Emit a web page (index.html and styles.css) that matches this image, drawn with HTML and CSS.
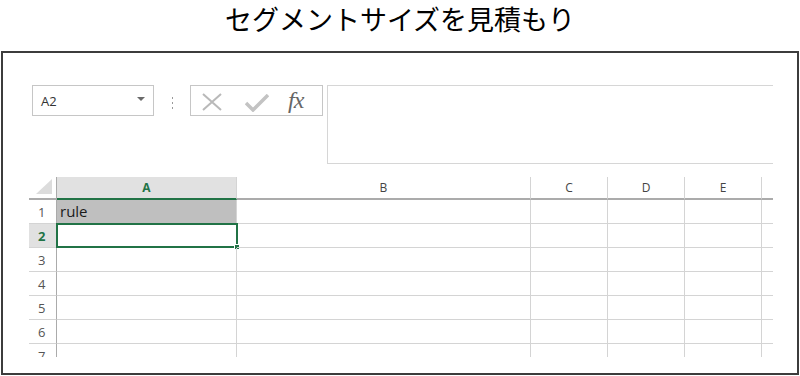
FILE: index.html
```html
<!DOCTYPE html>
<html lang="ja">
<head>
    <meta charset="UTF-8">
    <meta name="viewport" content="width=device-width, initial-scale=1.0">
    <title>セグメントサイズを見積もり</title>
    <link rel="stylesheet" href="styles.css">
</head>
<body>
    <h1 class="title">セグメントサイズを見積もり</h1>

    <div class="frame">
        <div class="formula-bar">
            <div class="name-box">
                <span>A2</span>
                <svg class="name-arrow" width="8" height="5" viewBox="0 0 8 5"><path d="M0 0 H8 L4 4 Z" fill="#6a6a6a"/></svg>
            </div>
            <svg class="grip" width="3" height="14" viewBox="0 0 3 14">
                <rect x="1" y="1" width="1" height="2" fill="#9a9a9a"/>
                <rect x="1" y="6" width="1" height="2" fill="#9a9a9a"/>
                <rect x="1" y="11" width="1" height="2" fill="#9a9a9a"/>
            </svg>
            <div class="fx-buttons">
                <svg class="icon-cancel" width="20" height="18" viewBox="0 0 20 18">
                    <path d="M1 1 L19 17 M19 1 L1 17" stroke="#b9b9b9" stroke-width="2" fill="none"/>
                </svg>
                <svg class="icon-enter" width="24" height="18" viewBox="0 0 24 18">
                    <path d="M1 9 L8 16 L23 1" stroke="#c3c3c3" stroke-width="3.5" fill="none"/>
                </svg>
                <span class="fx">fx</span>
            </div>
            <div class="formula-input"></div>
        </div>

        <div class="sheet">
            <!-- column headers -->
            <div class="cell corner"><span class="corner-mark"></span></div>
            <div class="cell col-head col-active">A</div>
            <div class="cell col-head">B</div>
            <div class="cell col-head">C</div>
            <div class="cell col-head">D</div>
            <div class="cell col-head">E</div>
            <div class="cell col-head last"></div>

            <!-- row 1 -->
            <div class="cell row-head">1</div>
            <div class="cell filled">rule</div>
            <div class="cell"></div>
            <div class="cell"></div>
            <div class="cell"></div>
            <div class="cell"></div>
            <div class="cell last"></div>

            <!-- row 2 -->
            <div class="cell row-head row-active">2</div>
            <div class="cell selected"><span class="fill-handle"></span></div>
            <div class="cell"></div>
            <div class="cell"></div>
            <div class="cell"></div>
            <div class="cell"></div>
            <div class="cell last"></div>

            <!-- row 3 -->
            <div class="cell row-head">3</div>
            <div class="cell"></div>
            <div class="cell"></div>
            <div class="cell"></div>
            <div class="cell"></div>
            <div class="cell"></div>
            <div class="cell last"></div>

            <!-- row 4 -->
            <div class="cell row-head">4</div>
            <div class="cell"></div>
            <div class="cell"></div>
            <div class="cell"></div>
            <div class="cell"></div>
            <div class="cell"></div>
            <div class="cell last"></div>

            <!-- row 5 -->
            <div class="cell row-head">5</div>
            <div class="cell"></div>
            <div class="cell"></div>
            <div class="cell"></div>
            <div class="cell"></div>
            <div class="cell"></div>
            <div class="cell last"></div>

            <!-- row 6 -->
            <div class="cell row-head">6</div>
            <div class="cell"></div>
            <div class="cell"></div>
            <div class="cell"></div>
            <div class="cell"></div>
            <div class="cell"></div>
            <div class="cell last"></div>

            <!-- row 7 (cut off, as in the window) -->
            <div class="cell row-head">7</div>
            <div class="cell"></div>
            <div class="cell"></div>
            <div class="cell"></div>
            <div class="cell"></div>
            <div class="cell"></div>
            <div class="cell last"></div>
        </div>
    </div>
</body>
</html>
```

FILE: styles.css
```css
:root {
    --frame: #3c3c3c;
    --grid: #d4d4d4;
    --head-line: #ababab;
    --green: #217346;
    --head-bg: #e1e1e1;
    --cell-fill: #bfbfbf;
}

* {
    box-sizing: border-box;
}

body {
    margin: 0;
    background: #ffffff;
    font-family: "Noto Sans", "Open Sans", sans-serif;
    color: #000000;
}

.title {
    margin: 0;
    height: 51px;
    padding-top: 1px;
    line-height: 36px;
    text-align: center;
    font-family: "Noto Sans CJK JP", "Noto Sans", sans-serif;
    font-size: 27px;
    font-weight: 400;
}

.frame {
    margin-left: 1px;
    width: 798px;
    height: 324px;
    border: 2px solid var(--frame);
    overflow: hidden;
}

/* formula bar */
.formula-bar {
    display: flex;
    align-items: flex-start;
    padding: 32px 0 0 29px;
    height: 124px;
}

.name-box {
    display: flex;
    align-items: center;
    justify-content: space-between;
    width: 122px;
    height: 31px;
    padding: 0 8px 0 8px;
    border: 1px solid #c6c6c6;
    font-family: "Open Sans", sans-serif;
    font-size: 13px;
    color: #333333;
}

.name-arrow {
    margin-top: -2px;
}

.grip {
    margin: 11px 16px 0 17px;
}

.fx-buttons {
    display: flex;
    align-items: center;
    width: 133px;
    height: 31px;
    padding-left: 11px;
    border: 1px solid #c6c6c6;
}

.icon-cancel {
    margin-top: 2px;
}

.icon-enter {
    margin: 4px 0 0 23px;
}

.fx {
    margin-left: 19px;
    font-family: "Liberation Serif", serif;
    font-style: italic;
    font-size: 24px;
    color: #666666;
    letter-spacing: -1px;
}

.formula-input {
    margin-left: 4px;
    width: 446px;
    height: 79px;
    border: 1px solid #d6d6d6;
    border-right: none;
}

/* sheet */
.sheet {
    display: grid;
    grid-template-columns: 28px 180px 294px 77px 77px 77px 11px;
    grid-template-rows: 23px repeat(7, 24px);
    margin-left: 26px;
    width: 744px;
    height: 180px;
    overflow: hidden;
    font-family: "Open Sans", sans-serif;
}

.cell {
    position: relative;
    border-right: 1px solid var(--grid);
    border-bottom: 1px solid var(--grid);
}

.cell.last {
    border-right: none;
}

.corner {
    border-right: 1px solid var(--head-line);
    border-bottom: 2px solid var(--head-line);
}

.corner-mark {
    position: absolute;
    right: 4px;
    bottom: 4px;
    width: 0;
    height: 0;
    border-left: 16px solid transparent;
    border-bottom: 15px solid #dcdcdc;
}

.col-head {
    display: flex;
    align-items: center;
    justify-content: center;
    border-bottom: 2px solid var(--head-line);
    font-size: 12px;
    color: #444444;
}

.col-active {
    background: var(--head-bg);
    border-bottom-color: var(--green);
    color: var(--green);
    font-weight: 700;
}

.row-head {
    display: flex;
    align-items: center;
    padding-left: 9px;
    border-right: 1px solid var(--head-line);
    font-size: 13px;
    color: #555555;
}

.row-active {
    background: var(--head-bg);
    color: var(--green);
    font-weight: 700;
}

.filled {
    background: var(--cell-fill);
    padding: 1px 0 0 3px;
    font-size: 15px;
    line-height: 21px;
    color: #1a1a1a;
}

.selected {
    border: 2px solid var(--green);
    margin: -1px 0 0 -1px;
    width: 182px;
}

.fill-handle {
    position: absolute;
    right: -4px;
    bottom: -4px;
    width: 6px;
    height: 6px;
    background: var(--green);
    border: 1px solid #ffffff;
}
```
